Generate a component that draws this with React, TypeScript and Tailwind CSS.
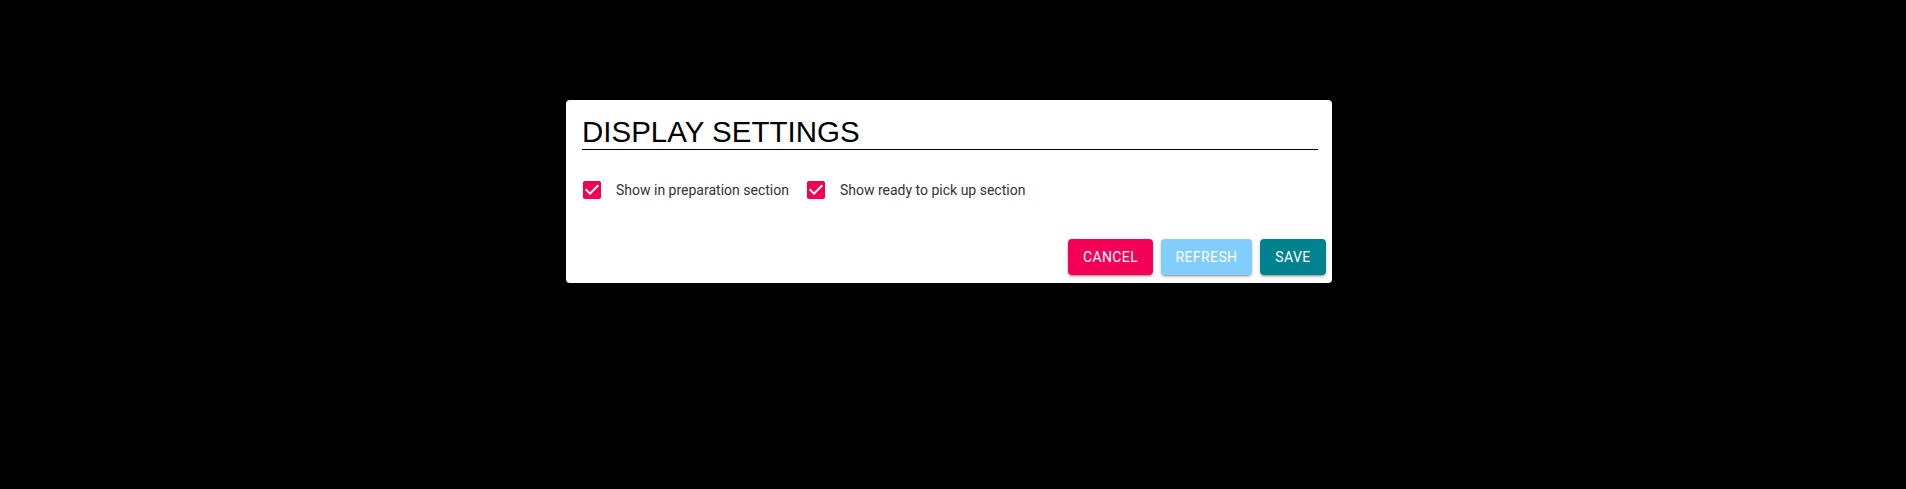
import React from "react";

const CheckIcon = () => (
  <svg width="24" height="24" viewBox="0 0 24 24" className="shrink-0 fill-[#f50057]">
    <path d="M19 3H5c-1.11 0-2 .9-2 2v14c0 1.1.89 2 2 2h14c1.11 0 2-.9 2-2V5c0-1.1-.89-2-2-2zm-9 14l-5-5 1.41-1.41L10 14.17l7.59-7.59L19 8l-9 9z" />
  </svg>
);

const options = ["Show in preparation section", "Show ready to pick up section"];

export default function App() {
  return (
    <div className="w-full h-[489px] bg-black pt-[100px] pl-[566px]">
      <div className="w-[766px] h-[183px] bg-white rounded-[4px] flex flex-col shadow-[0_11px_15px_-7px_rgba(0,0,0,0.2),0_24px_38px_3px_rgba(0,0,0,0.14)]">
        {/* title */}
        <div className="pt-[17px] pl-[16px] pr-[14px]">
          <h2 className="text-[29.5px] leading-[30px] text-black pb-[2px] border-b border-black font-['Liberation_Sans',Arial,sans-serif]">
            DISPLAY SETTINGS
          </h2>
        </div>

        {/* options */}
        <div className="flex items-center pl-[14px] mt-[28px] font-['Roboto',sans-serif] text-[14px] text-[#333]">
          {options.map((label, i) => (
            <label key={i} className="flex items-center mr-[15px]">
              <CheckIcon />
              <span className="ml-[12px] leading-[24px]">{label}</span>
            </label>
          ))}
        </div>

        {/* actions */}
        <div className="mt-auto flex justify-end gap-[8px] pr-[6px] pb-[8px] font-['Roboto',sans-serif]">
          <button className="h-[36px] w-[85px] rounded-[4px] bg-[#f50057] text-white text-[14px] font-normal uppercase tracking-[0.4px] shadow-[0_3px_1px_-2px_rgba(0,0,0,0.2),0_2px_2px_0_rgba(0,0,0,0.14),0_1px_5px_0_rgba(0,0,0,0.12)]">
            Cancel
          </button>
          <button className="h-[36px] w-[91px] rounded-[4px] bg-[#81cdfb] text-white text-[14px] font-normal uppercase tracking-[0.4px] shadow-[0_3px_1px_-2px_rgba(0,0,0,0.2),0_2px_2px_0_rgba(0,0,0,0.14),0_1px_5px_0_rgba(0,0,0,0.12)]">
            Refresh
          </button>
          <button className="h-[36px] w-[66px] rounded-[4px] bg-[#00838f] text-white text-[14px] font-normal uppercase tracking-[0.4px] shadow-[0_3px_1px_-2px_rgba(0,0,0,0.2),0_2px_2px_0_rgba(0,0,0,0.14),0_1px_5px_0_rgba(0,0,0,0.12)]">
            Save
          </button>
        </div>
      </div>
    </div>
  );
}
